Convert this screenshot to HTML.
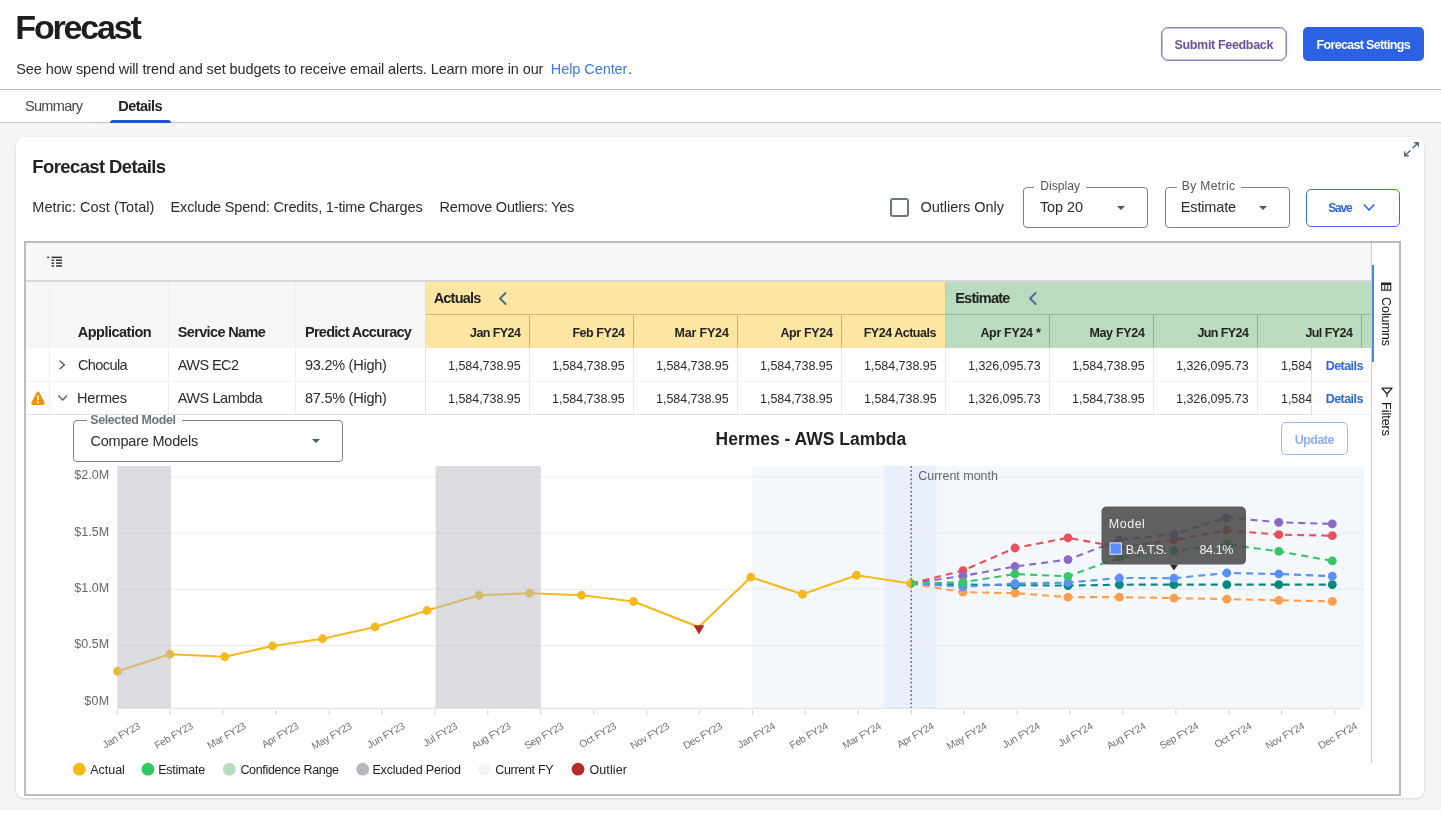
<!DOCTYPE html>
<html lang="en"><head><meta charset="utf-8"><title>Forecast</title>
<style>
*{box-sizing:border-box;margin:0;padding:0}
html,body{width:1441px;height:814px;overflow:hidden;background:#fff}
.pagebg{position:absolute;left:0;top:123px;width:1441px;height:687px;background:#f4f5f5}
body{font-family:"Liberation Sans",sans-serif;color:#333;position:relative}
#app{position:absolute;left:0;top:0;width:1441px;height:814px;overflow:hidden;will-change:transform}
#app span,#app a,#app h1,#app h2,#app label,#app button span{position:absolute;white-space:nowrap;line-height:1;font-weight:400}
.abs{position:absolute}
a{text-decoration:none}
header{position:absolute;left:0;top:0;width:1441px;height:90px;background:#fff;border-bottom:1px solid #bcbcbc}
nav{position:absolute;left:0;top:90px;width:1441px;height:33px;background:#fff;border-bottom:1px solid #c4c4c4}
.card{position:absolute;left:16px;top:137px;width:1408px;height:661px;background:#fff;border-radius:8px;box-shadow:0 1px 3px rgba(0,0,0,.13),0 0 1px rgba(0,0,0,.08)}
.btn{position:absolute;border-radius:6px}
.fs{position:absolute;border:1px solid #79818b;border-radius:4px;background:#fff}
.fs i{position:absolute;top:-3px;height:6px;background:#fff}
.tri{position:absolute;width:0;height:0;border-left:4px solid transparent;border-right:4px solid transparent;border-top:4.5px solid #40597a}
</style></head><body><div id="app">

<div class="pagebg"></div><header></header><nav></nav>
<h1 style="left:15.30px;top:10.00px;font-size:34px;font-weight:700;color:#1d1d1f;letter-spacing:-2.158px;">Forecast</h1>
<span style="left:16.30px;top:61.75px;font-size:14.5px;color:#2b2b2b;letter-spacing:-0.108px;">See how spend will trend and set budgets to receive email alerts. Learn more in our</span>
<a style="left:550.80px;top:61.75px;font-size:14.5px;color:#3f76e4;letter-spacing:-0.074px;">Help Center</a>
<span style="left:628.00px;top:61.75px;font-size:14.5px;color:#2b2b2b;">.</span>
<div class="btn" style="left:1161px;top:27px;width:126px;height:34px;border:1px solid #8e75bb;box-shadow:inset 0 0 0 1px rgba(142,117,187,.45);border-radius:7px;background:#fff"></div>
<span style="left:1174.50px;top:38.75px;font-size:12.5px;font-weight:700;color:#6a4fa4;letter-spacing:-0.332px;">Submit Feedback</span>
<div class="btn" style="left:1303px;top:27px;width:121px;height:34px;background:#2a62e3;border-radius:5px"></div>
<span style="left:1316.50px;top:38.75px;font-size:12.5px;font-weight:700;color:#fff;letter-spacing:-0.665px;">Forecast Settings</span>
<span style="left:24.90px;top:98.75px;font-size:14.5px;color:#444;letter-spacing:-0.648px;">Summary</span>
<span style="left:118.30px;top:98.75px;font-size:14.5px;font-weight:700;color:#222;letter-spacing:-0.548px;">Details</span>
<div class="abs" style="left:110px;top:120px;width:61px;height:3px;background:#1f56d8;border-radius:3px 3px 0 0"></div>
<section class="card"></section>
<h2 style="left:32.30px;top:158.25px;font-size:18.5px;font-weight:700;color:#222;letter-spacing:-0.609px;">Forecast Details</h2>
<span style="left:32.30px;top:199.75px;font-size:14.5px;color:#2b2b2b;letter-spacing:0.020px;">Metric: Cost (Total)</span>
<span style="left:170.60px;top:199.75px;font-size:14.5px;color:#2b2b2b;letter-spacing:-0.180px;">Exclude Spend: Credits, 1-time Charges</span>
<span style="left:439.60px;top:199.75px;font-size:14.5px;color:#2b2b2b;letter-spacing:-0.249px;">Remove Outliers: Yes</span>
<svg class="abs" style="left:1403px;top:141px" width="17" height="17" viewBox="0 0 17 17" fill="none" stroke="#4f6480" stroke-width="1.35" stroke-linecap="butt" stroke-linejoin="miter"><path d="M9.5 7.2 L15 1.9 M11.2 1.7 H15.3 V5.8 M7.3 9.4 L2 14.7 M1.7 10.6 V14.9 H5.8"/><path d="M12.8 1.7 H15.3 V4.2 Z M1.7 12.4 V14.9 H4.2 Z" fill="#4f6480" stroke="none"/></svg>
<div class="abs" style="left:890px;top:198px;width:18.5px;height:18.5px;border:2px solid #6b7685;border-radius:3px;background:#fff"></div>
<span style="left:920.40px;top:199.75px;font-size:14.5px;color:#2b2b2b;letter-spacing:-0.012px;">Outliers Only</span>
<div class="fs" style="left:1023px;top:187px;width:125px;height:41px"><i style="left:10px;width:52px"></i></div>
<span style="left:1040.30px;top:180.00px;font-size:12px;color:#555;letter-spacing:0.059px;">Display</span>
<span style="left:1039.90px;top:199.75px;font-size:14.5px;color:#2b2b2b;letter-spacing:-0.054px;">Top 20</span>
<div class="tri" style="left:1117px;top:206px"></div>
<div class="fs" style="left:1165px;top:187px;width:125px;height:41px"><i style="left:10.5px;width:64px"></i></div>
<span style="left:1181.80px;top:180.00px;font-size:12px;color:#555;letter-spacing:0.412px;">By Metric</span>
<span style="left:1180.80px;top:199.75px;font-size:14.5px;color:#2b2b2b;letter-spacing:-0.163px;">Estimate</span>
<div class="tri" style="left:1258.5px;top:206px"></div>
<div class="btn" style="left:1306px;top:189px;width:94px;height:37.5px;border:1px solid #3a6fe3;border-radius:5px;background:#fff"></div>
<span style="left:1328.20px;top:202.00px;font-size:12px;font-weight:700;color:#2f66e0;letter-spacing:-1.184px;">Save</span>
<svg class="abs" style="left:1362px;top:202px" width="14" height="11" viewBox="0 0 14 11" fill="none" stroke="#2f66e0" stroke-width="1.7" stroke-linecap="round" stroke-linejoin="round"><path d="M2.3 3 L7 8 L11.7 3"/></svg>
<div class="abs" style="left:24px;top:241px;width:1377px;height:555px;border:2px solid #b9bcc3;background:#fff"></div>
<div class="abs" style="left:26px;top:242.5px;width:1345px;height:37.5px;background:#f8f8f8"></div>
<div class="abs" style="left:26px;top:280px;width:1345px;height:2px;background:#d6d8de"></div>
<svg class="abs" style="left:46px;top:255px" width="18" height="13" viewBox="0 0 18 13" fill="#3a3a3a"><rect x="1.2" y="1.6" width="2" height="1.5"/><rect x="5.5" y="1.6" width="10.5" height="1.5"/><rect x="5.5" y="4.5" width="2.6" height="1.5"/><rect x="10" y="4.5" width="6" height="1.5"/><rect x="5.5" y="7.4" width="2.6" height="1.5"/><rect x="10" y="7.4" width="6" height="1.5"/><rect x="5.5" y="10.2" width="2.6" height="1.5"/><rect x="10" y="10.2" width="6" height="1.5"/></svg>
<div class="abs" style="left:26px;top:282px;width:399.5px;height:65.5px;background:#f6f6f7"></div>
<div class="abs" style="left:425.5px;top:282px;width:520px;height:65.5px;background:#fce6a2"></div>
<div class="abs" style="left:945.5px;top:282px;width:425.5px;height:65.5px;background:#badbbe"></div>
<div class="abs" style="left:945px;top:282px;width:1px;height:65.5px;background:#d2c691"></div>
<div class="abs" style="left:425.5px;top:314px;width:520px;height:1px;background:#cbbd86"></div>
<div class="abs" style="left:945.5px;top:314px;width:425.5px;height:1px;background:#96b59b"></div>
<div class="abs" style="left:529.0px;top:314px;width:1px;height:33.5px;background:#c3b682"></div>
<div class="abs" style="left:633.0px;top:314px;width:1px;height:33.5px;background:#c3b682"></div>
<div class="abs" style="left:737.0px;top:314px;width:1px;height:33.5px;background:#c3b682"></div>
<div class="abs" style="left:841.0px;top:314px;width:1px;height:33.5px;background:#c3b682"></div>
<div class="abs" style="left:1049.0px;top:314px;width:1px;height:33.5px;background:#8fae94"></div>
<div class="abs" style="left:1153.0px;top:314px;width:1px;height:33.5px;background:#8fae94"></div>
<div class="abs" style="left:1257.0px;top:314px;width:1px;height:33.5px;background:#8fae94"></div>
<div class="abs" style="left:1361.0px;top:314px;width:1px;height:33.5px;background:#8fae94"></div>
<div class="abs" style="left:48.5px;top:282px;width:1px;height:132px;background:#eceef1"></div>
<div class="abs" style="left:168.0px;top:282px;width:1px;height:132px;background:#eceef1"></div>
<div class="abs" style="left:295.0px;top:282px;width:1px;height:132px;background:#eceef1"></div>
<div class="abs" style="left:425px;top:282px;width:1px;height:132.5px;background:#dcdfe5"></div>
<div class="abs" style="left:529.0px;top:347.5px;width:1px;height:67px;background:#e9ebef"></div>
<div class="abs" style="left:633.0px;top:347.5px;width:1px;height:67px;background:#e9ebef"></div>
<div class="abs" style="left:737.0px;top:347.5px;width:1px;height:67px;background:#e9ebef"></div>
<div class="abs" style="left:841.0px;top:347.5px;width:1px;height:67px;background:#e9ebef"></div>
<div class="abs" style="left:945.0px;top:347.5px;width:1px;height:67px;background:#e9ebef"></div>
<div class="abs" style="left:1049.0px;top:347.5px;width:1px;height:67px;background:#e9ebef"></div>
<div class="abs" style="left:1153.0px;top:347.5px;width:1px;height:67px;background:#e9ebef"></div>
<div class="abs" style="left:1257.0px;top:347.5px;width:1px;height:67px;background:#e9ebef"></div>
<div class="abs" style="left:26px;top:380.5px;width:1345px;height:1px;background:#f1f2f5"></div>
<div class="abs" style="left:26px;top:414px;width:1285px;height:1px;background:#dfe1e6"></div>
<div class="abs" style="left:1311px;top:414px;width:60px;height:1px;background:#eceef1"></div>
<span style="left:77.70px;top:324.75px;font-size:14.5px;font-weight:700;color:#222;letter-spacing:-0.499px;">Application</span>
<span style="left:177.70px;top:324.75px;font-size:14.5px;font-weight:700;color:#222;letter-spacing:-0.632px;">Service Name</span>
<span style="left:305.00px;top:324.75px;font-size:14.5px;font-weight:700;color:#222;letter-spacing:-0.734px;">Predict Accuracy</span>
<span style="left:433.70px;top:290.75px;font-size:14.5px;font-weight:700;color:#222;letter-spacing:-0.802px;">Actuals</span>
<span style="left:955.20px;top:290.75px;font-size:14.5px;font-weight:700;color:#222;letter-spacing:-0.754px;">Estimate</span>
<svg class="abs" style="left:497px;top:290px" width="12" height="17" viewBox="0 0 12 17" fill="none" stroke="#48699a" stroke-width="1.9" stroke-linecap="round" stroke-linejoin="round"><path d="M8.6 3 L3 8.5 L8.6 14"/></svg>
<svg class="abs" style="left:1027px;top:290px" width="12" height="17" viewBox="0 0 12 17" fill="none" stroke="#48699a" stroke-width="1.9" stroke-linecap="round" stroke-linejoin="round"><path d="M8.6 3 L3 8.5 L8.6 14"/></svg>
<span style="left:470.10px;top:326.75px;font-size:12.5px;font-weight:700;color:#222;letter-spacing:-0.591px;">Jan FY24</span>
<span style="left:572.40px;top:326.75px;font-size:12.5px;font-weight:700;color:#222;letter-spacing:-0.446px;">Feb FY24</span>
<span style="left:674.40px;top:326.75px;font-size:12.5px;font-weight:700;color:#222;letter-spacing:-0.161px;">Mar FY24</span>
<span style="left:780.40px;top:326.75px;font-size:12.5px;font-weight:700;color:#222;letter-spacing:-0.346px;">Apr FY24</span>
<span style="left:863.70px;top:326.75px;font-size:12.5px;font-weight:700;color:#222;letter-spacing:-0.487px;">FY24 Actuals</span>
<span style="left:980.40px;top:326.75px;font-size:12.5px;font-weight:700;color:#222;letter-spacing:-0.317px;">Apr FY24 *</span>
<span style="left:1089.40px;top:326.75px;font-size:12.5px;font-weight:700;color:#222;letter-spacing:-0.316px;">May FY24</span>
<span style="left:1197.40px;top:326.75px;font-size:12.5px;font-weight:700;color:#222;letter-spacing:-0.589px;">Jun FY24</span>
<span style="left:1305.40px;top:326.75px;font-size:12.5px;font-weight:700;color:#222;letter-spacing:-0.565px;">Jul FY24</span>
<span style="left:77.90px;top:357.75px;font-size:14.5px;color:#2b2b2b;letter-spacing:-0.573px;">Chocula</span>
<span style="left:177.70px;top:357.75px;font-size:14.5px;color:#2b2b2b;letter-spacing:-0.560px;">AWS EC2</span>
<span style="left:305.00px;top:357.75px;font-size:14.5px;color:#2b2b2b;letter-spacing:-0.254px;">93.2% (High)</span>
<span style="left:448.10px;top:359.75px;font-size:12.5px;color:#2b2b2b;letter-spacing:-0.039px;">1,584,738.95</span>
<span style="left:552.10px;top:359.75px;font-size:12.5px;color:#2b2b2b;letter-spacing:-0.039px;">1,584,738.95</span>
<span style="left:656.10px;top:359.75px;font-size:12.5px;color:#2b2b2b;letter-spacing:-0.039px;">1,584,738.95</span>
<span style="left:760.10px;top:359.75px;font-size:12.5px;color:#2b2b2b;letter-spacing:-0.039px;">1,584,738.95</span>
<span style="left:864.10px;top:359.75px;font-size:12.5px;color:#2b2b2b;letter-spacing:-0.039px;">1,584,738.95</span>
<span style="left:968.10px;top:359.75px;font-size:12.5px;color:#2b2b2b;letter-spacing:-0.039px;">1,326,095.73</span>
<span style="left:1072.10px;top:359.75px;font-size:12.5px;color:#2b2b2b;letter-spacing:-0.039px;">1,584,738.95</span>
<span style="left:1176.10px;top:359.75px;font-size:12.5px;color:#2b2b2b;letter-spacing:-0.039px;">1,326,095.73</span>
<span style="left:76.90px;top:390.75px;font-size:14.5px;color:#2b2b2b;letter-spacing:-0.121px;">Hermes</span>
<span style="left:177.70px;top:390.75px;font-size:14.5px;color:#2b2b2b;letter-spacing:-0.450px;">AWS Lambda</span>
<span style="left:305.00px;top:390.75px;font-size:14.5px;color:#2b2b2b;letter-spacing:-0.254px;">87.5% (High)</span>
<span style="left:448.10px;top:392.75px;font-size:12.5px;color:#2b2b2b;letter-spacing:-0.039px;">1,584,738.95</span>
<span style="left:552.10px;top:392.75px;font-size:12.5px;color:#2b2b2b;letter-spacing:-0.039px;">1,584,738.95</span>
<span style="left:656.10px;top:392.75px;font-size:12.5px;color:#2b2b2b;letter-spacing:-0.039px;">1,584,738.95</span>
<span style="left:760.10px;top:392.75px;font-size:12.5px;color:#2b2b2b;letter-spacing:-0.039px;">1,584,738.95</span>
<span style="left:864.10px;top:392.75px;font-size:12.5px;color:#2b2b2b;letter-spacing:-0.039px;">1,584,738.95</span>
<span style="left:968.10px;top:392.75px;font-size:12.5px;color:#2b2b2b;letter-spacing:-0.039px;">1,326,095.73</span>
<span style="left:1072.10px;top:392.75px;font-size:12.5px;color:#2b2b2b;letter-spacing:-0.039px;">1,584,738.95</span>
<span style="left:1176.10px;top:392.75px;font-size:12.5px;color:#2b2b2b;letter-spacing:-0.039px;">1,326,095.73</span>
<div class="abs" style="left:1257.5px;top:348px;width:53.5px;height:66px;overflow:hidden">
<span style="left:23.50px;top:11.75px;font-size:12.5px;color:#2b2b2b;letter-spacing:-0.049px;">1,584,738.95</span>
<span style="left:23.50px;top:44.75px;font-size:12.5px;color:#2b2b2b;letter-spacing:-0.049px;">1,584,738.95</span>
</div>
<div class="abs" style="left:1311px;top:347.5px;width:1px;height:67px;background:#dcdfe5"></div>
<a style="left:1325.70px;top:359.75px;font-size:12.5px;font-weight:700;color:#2f66e0;letter-spacing:-0.540px;">Details</a>
<a style="left:1325.70px;top:392.75px;font-size:12.5px;font-weight:700;color:#2f66e0;letter-spacing:-0.540px;">Details</a>
<svg class="abs" style="left:56px;top:358px" width="12" height="14" viewBox="0 0 12 14" fill="none" stroke="#4b6886" stroke-width="1.5" stroke-linecap="round" stroke-linejoin="round"><path d="M4 3 L8.4 6.9 L4 10.8"/></svg>
<svg class="abs" style="left:56px;top:392px" width="14" height="12" viewBox="0 0 14 12" fill="none" stroke="#4b6886" stroke-width="1.5" stroke-linecap="round" stroke-linejoin="round"><path d="M2.8 4 L6.7 8 L10.6 4"/></svg>
<svg class="abs" style="left:30px;top:390px" width="16" height="16" viewBox="0 0 16 16"><path d="M8 1.6 C8.6 1.6 9.1 1.9 9.4 2.5 L14.6 12.6 C15.1 13.7 14.4 14.9 13.2 14.9 H2.8 C1.6 14.9 0.9 13.7 1.4 12.6 L6.6 2.5 C6.9 1.9 7.4 1.6 8 1.6 Z" fill="#e8940d"/><rect x="7.2" y="5.6" width="1.6" height="4.8" rx=".8" fill="#fff"/><circle cx="8" cy="12.2" r=".95" fill="#fff"/></svg>
<div class="abs" style="left:1371px;top:242.5px;width:1px;height:520px;background:#c9ccd2"></div>
<div class="abs" style="left:1372px;top:265px;width:2px;height:97px;background:#4a86e8"></div>
<svg class="abs" style="left:1380px;top:282px" width="12" height="10" viewBox="0 0 12 10"><rect x="1.7" y="1.2" width="9" height="7" fill="none" stroke="#222" stroke-width="1.1"/><rect x="1.2" y="0.8" width="10" height="2.2" fill="#222"/><rect x="4.3" y="2" width="1" height="6" fill="#222"/><rect x="7.2" y="2" width="1" height="6" fill="#222"/></svg>
<span style="left:1379.2px;top:297.2px;font-size:12.5px;color:#111;writing-mode:vertical-rl;line-height:1;letter-spacing:-0.05px;width:12.5px">Columns</span>
<svg class="abs" style="left:1380px;top:386px" width="14" height="12" viewBox="0 0 14 12" fill="none" stroke="#222" stroke-width="1.3" stroke-linejoin="round" stroke-linecap="round"><path d="M2 2.2 H12 L7 8 Z M7 8 V10.6"/></svg>
<span style="left:1379.2px;top:402.2px;font-size:12.5px;color:#111;writing-mode:vertical-rl;line-height:1;width:12.5px">Filters</span>
<div class="fs" style="left:73px;top:420px;width:270px;height:42px"><i style="left:12.5px;width:95px"></i></div>
<span style="left:90.20px;top:413.75px;font-size:12.5px;font-weight:700;color:#6f747b;letter-spacing:-0.394px;">Selected Model</span>
<span style="left:90.40px;top:433.75px;font-size:14.5px;color:#2b2b2b;letter-spacing:-0.197px;">Compare Models</span>
<div class="tri" style="left:311.5px;top:439px"></div>
<h2 style="left:715.60px;top:431.25px;font-size:17.5px;font-weight:700;color:#222;letter-spacing:-0.014px;">Hermes - AWS Lambda</h2>
<div class="btn" style="left:1281px;top:422px;width:67px;height:33px;border:1px solid #9dbaf2;border-radius:5px;background:#fff"></div>
<span style="left:1294.80px;top:433.75px;font-size:12.5px;font-weight:700;color:#8eaef0;letter-spacing:-0.543px;">Update</span>
<svg class="abs" style="left:0;top:0" width="1441" height="814" viewBox="0 0 1441 814" font-family="Liberation Sans, sans-serif">
<rect x="752.3" y="466" width="611.9" height="242" fill="#f4f7fc"/>
<rect x="884.5" y="466" width="52" height="242" fill="#e9effc"/>
<line x1="117.25" x2="1364.2" y1="477" y2="477" stroke="#e9ebee" stroke-width="1.2" stroke-opacity=".9"/>
<line x1="117.25" x2="1364.2" y1="533.2" y2="533.2" stroke="#e9ebee" stroke-width="1.2" stroke-opacity=".9"/>
<line x1="117.25" x2="1364.2" y1="589.4" y2="589.4" stroke="#e9ebee" stroke-width="1.2" stroke-opacity=".9"/>
<line x1="117.25" x2="1364.2" y1="645.6" y2="645.6" stroke="#e9ebee" stroke-width="1.2" stroke-opacity=".9"/>
<line x1="116.75" x2="1360" y1="708.4" y2="708.4" stroke="#e1e4ec" stroke-width="1.2"/>
<line x1="117.25" x2="117.25" y1="709.8" y2="714.7" stroke="#d6dae6" stroke-width="1.3"/>
<line x1="170.18" x2="170.18" y1="709.8" y2="714.7" stroke="#d6dae6" stroke-width="1.3"/>
<line x1="223.11" x2="223.11" y1="709.8" y2="714.7" stroke="#d6dae6" stroke-width="1.3"/>
<line x1="276.04" x2="276.04" y1="709.8" y2="714.7" stroke="#d6dae6" stroke-width="1.3"/>
<line x1="328.97" x2="328.97" y1="709.8" y2="714.7" stroke="#d6dae6" stroke-width="1.3"/>
<line x1="381.90" x2="381.90" y1="709.8" y2="714.7" stroke="#d6dae6" stroke-width="1.3"/>
<line x1="434.83" x2="434.83" y1="709.8" y2="714.7" stroke="#d6dae6" stroke-width="1.3"/>
<line x1="487.76" x2="487.76" y1="709.8" y2="714.7" stroke="#d6dae6" stroke-width="1.3"/>
<line x1="540.69" x2="540.69" y1="709.8" y2="714.7" stroke="#d6dae6" stroke-width="1.3"/>
<line x1="593.62" x2="593.62" y1="709.8" y2="714.7" stroke="#d6dae6" stroke-width="1.3"/>
<line x1="646.55" x2="646.55" y1="709.8" y2="714.7" stroke="#d6dae6" stroke-width="1.3"/>
<line x1="699.48" x2="699.48" y1="709.8" y2="714.7" stroke="#d6dae6" stroke-width="1.3"/>
<line x1="752.41" x2="752.41" y1="709.8" y2="714.7" stroke="#d6dae6" stroke-width="1.3"/>
<line x1="805.34" x2="805.34" y1="709.8" y2="714.7" stroke="#d6dae6" stroke-width="1.3"/>
<line x1="858.27" x2="858.27" y1="709.8" y2="714.7" stroke="#d6dae6" stroke-width="1.3"/>
<line x1="911.20" x2="911.20" y1="709.8" y2="714.7" stroke="#d6dae6" stroke-width="1.3"/>
<line x1="964.13" x2="964.13" y1="709.8" y2="714.7" stroke="#d6dae6" stroke-width="1.3"/>
<line x1="1017.06" x2="1017.06" y1="709.8" y2="714.7" stroke="#d6dae6" stroke-width="1.3"/>
<line x1="1069.99" x2="1069.99" y1="709.8" y2="714.7" stroke="#d6dae6" stroke-width="1.3"/>
<line x1="1122.92" x2="1122.92" y1="709.8" y2="714.7" stroke="#d6dae6" stroke-width="1.3"/>
<line x1="1175.85" x2="1175.85" y1="709.8" y2="714.7" stroke="#d6dae6" stroke-width="1.3"/>
<line x1="1228.78" x2="1228.78" y1="709.8" y2="714.7" stroke="#d6dae6" stroke-width="1.3"/>
<line x1="1281.71" x2="1281.71" y1="709.8" y2="714.7" stroke="#d6dae6" stroke-width="1.3"/>
<line x1="1334.64" x2="1334.64" y1="709.8" y2="714.7" stroke="#d6dae6" stroke-width="1.3"/>
<polyline fill="none" stroke="#f5b81d" stroke-width="2.1" stroke-linejoin="round" points="117.5,671.25 169.75,654.25 224.75,656.75 272.5,646 322.5,638.75 375,627 427,610.5 479,595.25 529.75,593.25 581.5,595.25 633.5,601.5 698.7,627 750.75,577.2 802.5,594.25 856.5,575.25 910.8,583.5"/>
<circle cx="117.5" cy="671.25" r="4.4" fill="#f5b81d"/>
<circle cx="169.75" cy="654.25" r="4.4" fill="#f5b81d"/>
<circle cx="224.75" cy="656.75" r="4.4" fill="#f5b81d"/>
<circle cx="272.5" cy="646" r="4.4" fill="#f5b81d"/>
<circle cx="322.5" cy="638.75" r="4.4" fill="#f5b81d"/>
<circle cx="375" cy="627" r="4.4" fill="#f5b81d"/>
<circle cx="427" cy="610.5" r="4.4" fill="#f5b81d"/>
<circle cx="479" cy="595.25" r="4.4" fill="#f5b81d"/>
<circle cx="529.75" cy="593.25" r="4.4" fill="#f5b81d"/>
<circle cx="581.5" cy="595.25" r="4.4" fill="#f5b81d"/>
<circle cx="633.5" cy="601.5" r="4.4" fill="#f5b81d"/>
<circle cx="750.75" cy="577.2" r="4.4" fill="#f5b81d"/>
<circle cx="802.5" cy="594.25" r="4.4" fill="#f5b81d"/>
<circle cx="856.5" cy="575.25" r="4.4" fill="#f5b81d"/>
<circle cx="910.8" cy="583.5" r="4.4" fill="#f5b81d"/>
<path d="M693.6 625.3 H704.3 L698.95 634.4 Z" fill="#b32727"/>
<rect x="117.25" y="466" width="53.7" height="242" fill="#b9bbc1" fill-opacity=".5"/>
<rect x="435.6" y="466" width="105.2" height="242" fill="#b9bbc1" fill-opacity=".5"/>
<line x1="911.2" x2="911.2" y1="466" y2="708" stroke="#6a6a6a" stroke-width="1.5" stroke-dasharray="1.8 2.35"/>
<polyline fill="none" stroke="#ff9d4d" stroke-width="2.1" stroke-dasharray="7 5" points="910.8,583.5 962.9,592.2 1015,593.1 1068,597.2 1119.4,597.1 1173.9,598.1 1226.8,599.1 1278.8,600.3 1332.3,601.4"/>
<polyline fill="none" stroke="#008a7e" stroke-width="2.1" stroke-dasharray="7 5" points="910.8,583.5 962.9,584.5 1015,585.2 1068,585.6 1119.4,584.7 1173.9,584.6 1226.8,584.6 1278.8,584.6 1332.3,584.6"/>
<polyline fill="none" stroke="#5b8ff9" stroke-width="2.1" stroke-dasharray="7 5" points="910.8,583.5 962.9,586.8 1015,583.5 1068,582.6 1119.4,578.0 1173.9,578.2 1226.8,573.0 1278.8,574.0 1332.3,576.2"/>
<polyline fill="none" stroke="#e8505b" stroke-width="2.1" stroke-dasharray="7 5" points="910.8,583.5 962.9,570.6 1015,548.0 1068,537.8 1119.4,547.3 1173.9,540.0 1226.8,530.3 1278.8,534.7 1332.3,535.7"/>
<polyline fill="none" stroke="#8c69c9" stroke-width="2.1" stroke-dasharray="7 5" points="910.8,583.5 962.9,575.9 1015,566.5 1068,559.6 1119.4,540.0 1173.9,534.3 1226.8,517.6 1278.8,522.3 1332.3,523.9"/>
<polyline fill="none" stroke="#35c766" stroke-width="2.1" stroke-dasharray="7 5" points="910.8,583.5 962.9,582.3 1015,574.0 1068,576.3 1119.4,557.5 1173.9,550.8 1226.8,544.4 1278.8,551.4 1332.3,560.9"/>
<circle cx="962.9" cy="592.2" r="4.4" fill="#ff9d4d"/>
<circle cx="1015" cy="593.1" r="4.4" fill="#ff9d4d"/>
<circle cx="1068" cy="597.2" r="4.4" fill="#ff9d4d"/>
<circle cx="1119.4" cy="597.1" r="4.4" fill="#ff9d4d"/>
<circle cx="1173.9" cy="598.1" r="4.4" fill="#ff9d4d"/>
<circle cx="1226.8" cy="599.1" r="4.4" fill="#ff9d4d"/>
<circle cx="1278.8" cy="600.3" r="4.4" fill="#ff9d4d"/>
<circle cx="1332.3" cy="601.4" r="4.4" fill="#ff9d4d"/>
<circle cx="962.9" cy="584.5" r="4.4" fill="#008a7e"/>
<circle cx="1015" cy="585.2" r="4.4" fill="#008a7e"/>
<circle cx="1068" cy="585.6" r="4.4" fill="#008a7e"/>
<circle cx="1119.4" cy="584.7" r="4.4" fill="#008a7e"/>
<circle cx="1173.9" cy="584.6" r="4.4" fill="#008a7e"/>
<circle cx="1226.8" cy="584.6" r="4.4" fill="#008a7e"/>
<circle cx="1278.8" cy="584.6" r="4.4" fill="#008a7e"/>
<circle cx="1332.3" cy="584.6" r="4.4" fill="#008a7e"/>
<circle cx="962.9" cy="586.8" r="4.4" fill="#5b8ff9"/>
<circle cx="1015" cy="583.5" r="4.4" fill="#5b8ff9"/>
<circle cx="1068" cy="582.6" r="4.4" fill="#5b8ff9"/>
<circle cx="1119.4" cy="578.0" r="4.4" fill="#5b8ff9"/>
<circle cx="1173.9" cy="578.2" r="4.4" fill="#5b8ff9"/>
<circle cx="1226.8" cy="573.0" r="4.4" fill="#5b8ff9"/>
<circle cx="1278.8" cy="574.0" r="4.4" fill="#5b8ff9"/>
<circle cx="1332.3" cy="576.2" r="4.4" fill="#5b8ff9"/>
<circle cx="962.9" cy="570.6" r="4.4" fill="#e8505b"/>
<circle cx="1015" cy="548.0" r="4.4" fill="#e8505b"/>
<circle cx="1068" cy="537.8" r="4.4" fill="#e8505b"/>
<circle cx="1119.4" cy="547.3" r="4.4" fill="#e8505b"/>
<circle cx="1173.9" cy="540.0" r="4.4" fill="#e8505b"/>
<circle cx="1226.8" cy="530.3" r="4.4" fill="#e8505b"/>
<circle cx="1278.8" cy="534.7" r="4.4" fill="#e8505b"/>
<circle cx="1332.3" cy="535.7" r="4.4" fill="#e8505b"/>
<circle cx="962.9" cy="575.9" r="4.4" fill="#8c69c9"/>
<circle cx="1015" cy="566.5" r="4.4" fill="#8c69c9"/>
<circle cx="1068" cy="559.6" r="4.4" fill="#8c69c9"/>
<circle cx="1119.4" cy="540.0" r="4.4" fill="#8c69c9"/>
<circle cx="1173.9" cy="534.3" r="4.4" fill="#8c69c9"/>
<circle cx="1226.8" cy="517.6" r="4.4" fill="#8c69c9"/>
<circle cx="1278.8" cy="522.3" r="4.4" fill="#8c69c9"/>
<circle cx="1332.3" cy="523.9" r="4.4" fill="#8c69c9"/>
<circle cx="962.9" cy="582.3" r="4.4" fill="#35c766"/>
<circle cx="1015" cy="574.0" r="4.4" fill="#35c766"/>
<circle cx="1068" cy="576.3" r="4.4" fill="#35c766"/>
<circle cx="1119.4" cy="557.5" r="4.4" fill="#35c766"/>
<circle cx="1173.9" cy="550.8" r="4.4" fill="#35c766"/>
<circle cx="1226.8" cy="544.4" r="4.4" fill="#35c766"/>
<circle cx="1278.8" cy="551.4" r="4.4" fill="#35c766"/>
<circle cx="1332.3" cy="560.9" r="4.4" fill="#35c766"/>
<circle cx="910.8" cy="583.5" r="4.4" fill="#f5b81d"/>
<path d="M911.2 579.2 A4.4 4.4 0 0 1 911.2 587.9 Z" fill="#35c766"/>
<text x="140.7" y="728" transform="rotate(-30 140.7 728)" text-anchor="end" font-size="10.2" letter-spacing="-0.3" fill="#707070">Jan FY23</text>
<text x="193.6" y="728" transform="rotate(-30 193.6 728)" text-anchor="end" font-size="10.2" letter-spacing="-0.3" fill="#707070">Feb FY23</text>
<text x="246.5" y="728" transform="rotate(-30 246.5 728)" text-anchor="end" font-size="10.2" letter-spacing="-0.3" fill="#707070">Mar FY23</text>
<text x="299.4" y="728" transform="rotate(-30 299.4 728)" text-anchor="end" font-size="10.2" letter-spacing="-0.3" fill="#707070">Apr FY23</text>
<text x="352.4" y="728" transform="rotate(-30 352.4 728)" text-anchor="end" font-size="10.2" letter-spacing="-0.3" fill="#707070">May FY23</text>
<text x="405.3" y="728" transform="rotate(-30 405.3 728)" text-anchor="end" font-size="10.2" letter-spacing="-0.3" fill="#707070">Jun FY23</text>
<text x="458.2" y="728" transform="rotate(-30 458.2 728)" text-anchor="end" font-size="10.2" letter-spacing="-0.3" fill="#707070">Jul FY23</text>
<text x="511.2" y="728" transform="rotate(-30 511.2 728)" text-anchor="end" font-size="10.2" letter-spacing="-0.3" fill="#707070">Aug FY23</text>
<text x="564.1" y="728" transform="rotate(-30 564.1 728)" text-anchor="end" font-size="10.2" letter-spacing="-0.3" fill="#707070">Sep FY23</text>
<text x="617.0" y="728" transform="rotate(-30 617.0 728)" text-anchor="end" font-size="10.2" letter-spacing="-0.3" fill="#707070">Oct FY23</text>
<text x="669.9" y="728" transform="rotate(-30 669.9 728)" text-anchor="end" font-size="10.2" letter-spacing="-0.3" fill="#707070">Nov FY23</text>
<text x="722.9" y="728" transform="rotate(-30 722.9 728)" text-anchor="end" font-size="10.2" letter-spacing="-0.3" fill="#707070">Dec FY23</text>
<text x="775.8" y="728" transform="rotate(-30 775.8 728)" text-anchor="end" font-size="10.2" letter-spacing="-0.3" fill="#707070">Jan FY24</text>
<text x="828.7" y="728" transform="rotate(-30 828.7 728)" text-anchor="end" font-size="10.2" letter-spacing="-0.3" fill="#707070">Feb FY24</text>
<text x="881.7" y="728" transform="rotate(-30 881.7 728)" text-anchor="end" font-size="10.2" letter-spacing="-0.3" fill="#707070">Mar FY24</text>
<text x="934.6" y="728" transform="rotate(-30 934.6 728)" text-anchor="end" font-size="10.2" letter-spacing="-0.3" fill="#707070">Apr FY24</text>
<text x="987.5" y="728" transform="rotate(-30 987.5 728)" text-anchor="end" font-size="10.2" letter-spacing="-0.3" fill="#707070">May FY24</text>
<text x="1040.5" y="728" transform="rotate(-30 1040.5 728)" text-anchor="end" font-size="10.2" letter-spacing="-0.3" fill="#707070">Jun FY24</text>
<text x="1093.4" y="728" transform="rotate(-30 1093.4 728)" text-anchor="end" font-size="10.2" letter-spacing="-0.3" fill="#707070">Jul FY24</text>
<text x="1146.3" y="728" transform="rotate(-30 1146.3 728)" text-anchor="end" font-size="10.2" letter-spacing="-0.3" fill="#707070">Aug FY24</text>
<text x="1199.2" y="728" transform="rotate(-30 1199.2 728)" text-anchor="end" font-size="10.2" letter-spacing="-0.3" fill="#707070">Sep FY24</text>
<text x="1252.2" y="728" transform="rotate(-30 1252.2 728)" text-anchor="end" font-size="10.2" letter-spacing="-0.3" fill="#707070">Oct FY24</text>
<text x="1305.1" y="728" transform="rotate(-30 1305.1 728)" text-anchor="end" font-size="10.2" letter-spacing="-0.3" fill="#707070">Nov FY24</text>
<text x="1358.0" y="728" transform="rotate(-30 1358.0 728)" text-anchor="end" font-size="10.2" letter-spacing="-0.3" fill="#707070">Dec FY24</text>
<rect x="1101.5" y="506.6" width="144.5" height="58" rx="5" fill="#474747" fill-opacity=".86"/>
<path d="M1169.8 564.6 H1178 L1173.9 570.6 Z" fill="#2d2d2d"/>
<rect x="1110" y="542.9" width="11.4" height="11.4" fill="#5b8ff9" stroke="#dfe8fb" stroke-width="1"/>
<circle cx="79.3" cy="769.2" r="6.4" fill="#f5b81d"/>
<circle cx="148" cy="769.2" r="6.4" fill="#35c766"/>
<circle cx="229.3" cy="769.2" r="6.4" fill="#b9dbbd"/>
<circle cx="362.7" cy="769.2" r="6.4" fill="#b5b8be"/>
<circle cx="484.5" cy="769.2" r="6.4" fill="#f1f5fa"/>
<circle cx="578" cy="769.2" r="6.4" fill="#b52a2a"/>
</svg>
<span style="left:74.30px;top:468.75px;font-size:12.5px;color:#666;letter-spacing:0.043px;">$2.0M</span>
<span style="left:74.30px;top:525.75px;font-size:12.5px;color:#666;letter-spacing:0.043px;">$1.5M</span>
<span style="left:74.30px;top:581.75px;font-size:12.5px;color:#666;letter-spacing:0.043px;">$1.0M</span>
<span style="left:74.30px;top:637.75px;font-size:12.5px;color:#666;letter-spacing:0.043px;">$0.5M</span>
<span style="left:84.30px;top:694.75px;font-size:12.5px;color:#666;letter-spacing:0.298px;">$0M</span>
<span style="left:918.20px;top:469.75px;font-size:12.5px;color:#666;letter-spacing:-0.012px;">Current month</span>
<span style="left:1108.80px;top:517.75px;font-size:12.5px;color:#f2f2f2;letter-spacing:0.508px;">Model</span>
<span style="left:1125.80px;top:543.75px;font-size:12.5px;color:#f2f2f2;letter-spacing:-0.597px;">B.A.T.S.</span>
<span style="left:1199.50px;top:543.75px;font-size:12.5px;color:#f2f2f2;letter-spacing:-0.382px;">84.1%</span>
<span style="left:90.20px;top:763.75px;font-size:12.5px;color:#222;letter-spacing:-0.013px;">Actual</span>
<span style="left:158.20px;top:763.75px;font-size:12.5px;color:#222;letter-spacing:-0.225px;">Estimate</span>
<span style="left:240.40px;top:763.75px;font-size:12.5px;color:#222;letter-spacing:-0.326px;">Confidence Range</span>
<span style="left:372.40px;top:763.75px;font-size:12.5px;color:#222;letter-spacing:-0.170px;">Excluded Period</span>
<span style="left:495.20px;top:763.75px;font-size:12.5px;color:#222;letter-spacing:-0.299px;">Current FY</span>
<span style="left:589.40px;top:763.75px;font-size:12.5px;color:#222;letter-spacing:0.124px;">Outlier</span>
</div></body></html>
